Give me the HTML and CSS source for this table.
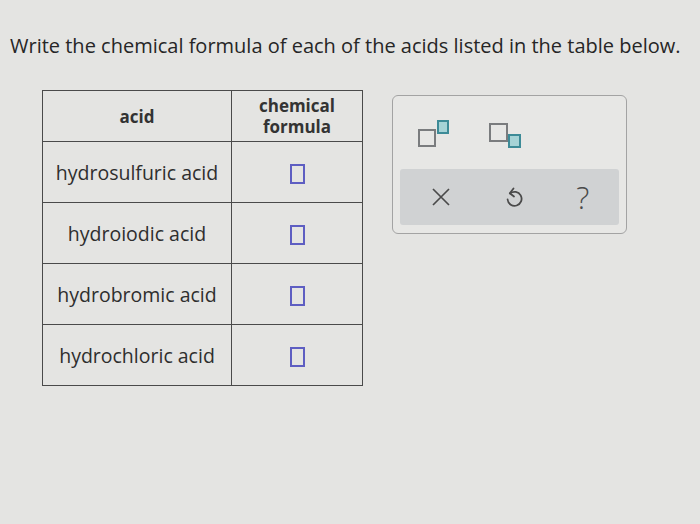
FILE: index.html
```html
<!DOCTYPE html>
<html>
<head>
<meta charset="utf-8">
<link rel="stylesheet" href="styles.css">
</head>
<body>
<p class="prompt">Write the chemical formula of each of the acids listed in the table below.</p>
<div class="work">
  <table class="acids">
    <tr class="head">
      <th class="c1">acid</th>
      <th class="c2">chemical<br>formula</th>
    </tr>
    <tr><td class="c1">hydrosulfuric acid</td><td class="c2"><span class="box"></span></td></tr>
    <tr><td class="c1">hydroiodic acid</td><td class="c2"><span class="box"></span></td></tr>
    <tr><td class="c1">hydrobromic acid</td><td class="c2"><span class="box"></span></td></tr>
    <tr><td class="c1">hydrochloric acid</td><td class="c2"><span class="box"></span></td></tr>
  </table>
  <div class="panel">
    <div class="tools">
      <svg class="tool" width="40" height="34" viewBox="0 0 40 34">
        <rect x="7" y="13" width="16" height="16" fill="none" stroke="#7a7c7e" stroke-width="2"/>
        <rect x="26" y="4" width="10" height="12" fill="#a6d3d6" stroke="#3d8b97" stroke-width="2"/>
      </svg>
      <svg class="tool" width="40" height="34" viewBox="0 0 40 34">
        <rect x="4" y="7" width="17" height="17" fill="none" stroke="#7a7c7e" stroke-width="2"/>
        <rect x="23" y="18" width="11" height="12" fill="#a6d3d6" stroke="#3d8b97" stroke-width="2"/>
      </svg>
    </div>
    <div class="actions">
      <svg class="act" width="22" height="22" viewBox="0 0 22 22">
        <path d="M3 3 L19 19 M19 3 L3 19" stroke="#4a4a4a" stroke-width="1.7" fill="none"/>
      </svg>
      <svg class="act" width="22" height="24" viewBox="0 0 22 24">
        <path d="M7 8.5 A7 7 0 1 1 4.6 14.5" stroke="#4a4a4a" stroke-width="1.8" fill="none" stroke-linecap="round"/>
        <path d="M10.5 3.5 L6.8 8.3 L11 11.5" stroke="#4a4a4a" stroke-width="1.8" fill="none" stroke-linecap="round" stroke-linejoin="round"/>
      </svg>
      <span class="help">?</span>
    </div>
  </div>
</div>
</body>
</html>
```
FILE: styles.css
```css
html, body {
  margin: 0;
  padding: 0;
  background: #e4e4e2;
  width: 700px;
  height: 524px;
  overflow: hidden;
  font-family: "Open Sans", "Liberation Sans", Arial, sans-serif;
  color: #2c2c2c;
}
.prompt {
  margin: 0;
  padding: 33px 0 0 10px;
  font-size: 20px;
  line-height: 26px;
  color: #262626;
}
.work {
  display: flex;
  align-items: flex-start;
  padding: 31px 0 0 42px;
}
.acids {
  border-collapse: collapse;
  border: 1px solid #4a4a4a;
}
.acids th, .acids td {
  border: 1px solid #4a4a4a;
  text-align: center;
  padding: 0;
}
.acids .c1 { width: 188px; }
.acids .c2 { width: 130px; }
.head th {
  height: 50px;
  font-size: 17px;
  line-height: 21px;
  font-weight: bold;
  color: #333;
}
.acids td {
  height: 60px;
  font-size: 19.5px;
  color: #2e2e2e;
}
.box {
  display: inline-block;
  width: 11px;
  height: 16px;
  border: 2px solid #5e5ec2;
  vertical-align: middle;
}
.panel {
  margin: 5px 0 0 29px;
  width: 233px;
  height: 137px;
  border: 1px solid #a3a3a3;
  border-radius: 6px;
  background: #e7e7e5;
  display: flex;
  flex-direction: column;
}
.tools {
  height: 73px;
  display: flex;
  align-items: center;
  padding-left: 19px;
  gap: 34px;
}
.tool { display: block; margin-top: 2px; }
.actions {
  margin: 0 7px 8px 7px;
  flex: 1;
  background: #d0d2d3;
  border-radius: 3px;
  display: flex;
  align-items: center;
  justify-content: space-around;
  padding: 0 4px;
}
.act { display: block; }
.help {
  font-size: 31px;
  color: #4a4a4a;
  font-family: "Open Sans", sans-serif;
  font-weight: 300;
  line-height: 30px;
}
```
